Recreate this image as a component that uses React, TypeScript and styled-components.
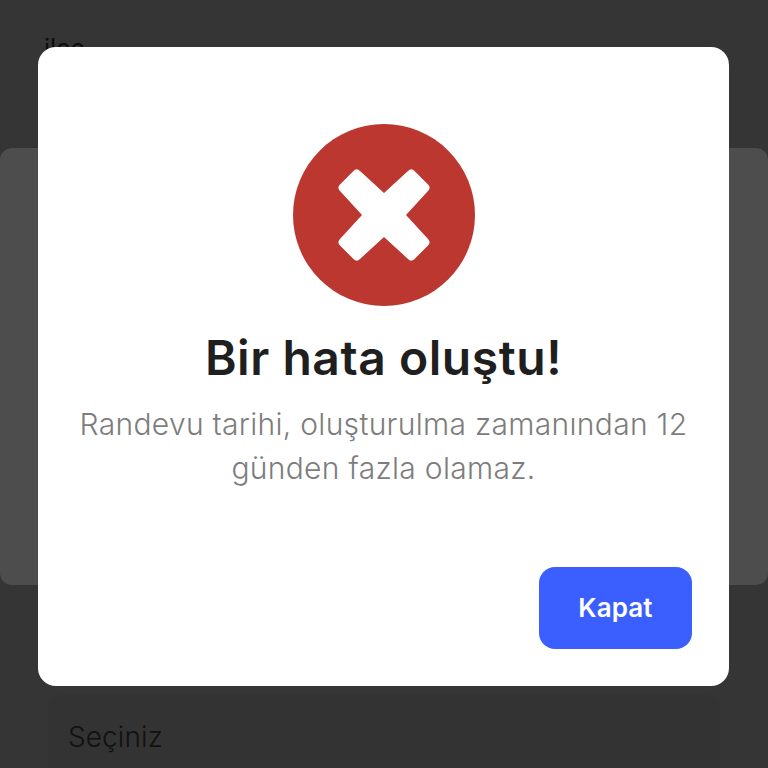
import styled, { createGlobalStyle } from "styled-components";

const GlobalStyle = createGlobalStyle`
  html, body {
    margin: 0;
    padding: 0;
    background: #353535;
    font-family: "Inter", "Noto Sans", sans-serif;
  }
  * {
    box-sizing: border-box;
  }
`;

const Page = styled.div`
  position: relative;
  width: 768px;
  height: 768px;
  overflow: hidden;
  background: #353535;
`;

const FieldLabel = styled.div`
  height: 148px;
  padding: 32px 0 0 44px;
  font-size: 25px;
  line-height: 32px;
  color: #0c0c0c;
`;

const Panel = styled.div`
  height: 437px;
  background: #4d4d4d;
  border-radius: 12px;
`;

const SelectBox = styled.div`
  margin: 110px 48px 0;
  height: 120px;
  padding: 22px 20px;
  background: #333333;
  border-radius: 14px;
  font-size: 28px;
  line-height: 40px;
  font-weight: 300;
  letter-spacing: 0.1px;
  color: #111111;
`;

const Modal = styled.div`
  position: absolute;
  top: 47px;
  left: 38px;
  width: 691px;
  height: 639px;
  padding: 77px 37px 37px;
  display: flex;
  flex-direction: column;
  align-items: center;
  background: #ffffff;
  border-radius: 18px;
`;

const ErrorIcon = styled.svg`
  display: block;
  width: 182px;
  height: 182px;
  flex: none;
`;

const Title = styled.h1`
  margin: 23px 0 0;
  font-size: 48px;
  line-height: 58px;
  font-weight: 600;
  letter-spacing: 0.55px;
  color: #1f1f1f;
  text-align: center;
  white-space: nowrap;
`;

const Message = styled.p`
  margin: 15px 0 0;
  width: 100%;
  font-size: 30px;
  line-height: 44px;
  font-weight: 300;
  letter-spacing: 0.3px;
  color: #7d7d7d;
  text-align: center;
  white-space: nowrap;
`;

const Actions = styled.div`
  margin-top: auto;
  width: 100%;
  display: flex;
  justify-content: flex-end;
`;

const CloseButton = styled.button`
  width: 153px;
  height: 82px;
  padding: 0 0 2px;
  border: none;
  border-radius: 16px;
  background: #3a5ffe;
  font-family: inherit;
  font-size: 26px;
  font-weight: 600;
  letter-spacing: 0.1px;
  color: #ffffff;
`;

const App = () => {
  return (
    <Page>
      <GlobalStyle />
      <FieldLabel>ilçe</FieldLabel>
      <Panel />
      <SelectBox>Seçiniz</SelectBox>
      <Modal>
        <ErrorIcon viewBox="0 0 182 182">
          <circle cx="91" cy="91" r="91" fill="#bc372f" />
          <path
            d="M46.5 61 L61 46.5 Q64 44 67 47 L91 69 L115 47 Q118 44 121 46.5 L135.5 61 Q138 64 135 67 L113 91 L135 115 Q138 118 135.5 121 L121 135.5 Q118 138 115 135 L91 113 L67 135 Q64 138 61 135.5 L46.5 121 Q44 118 47 115 L69 91 L47 67 Q44 64 46.5 61 Z"
            fill="#ffffff"
          />
        </ErrorIcon>
        <Title>Bir hata oluştu!</Title>
        <Message>
          Randevu tarihi, oluşturulma zamanından 12
          <br />
          günden fazla olamaz.
        </Message>
        <Actions>
          <CloseButton>Kapat</CloseButton>
        </Actions>
      </Modal>
    </Page>
  );
};

export default App;
